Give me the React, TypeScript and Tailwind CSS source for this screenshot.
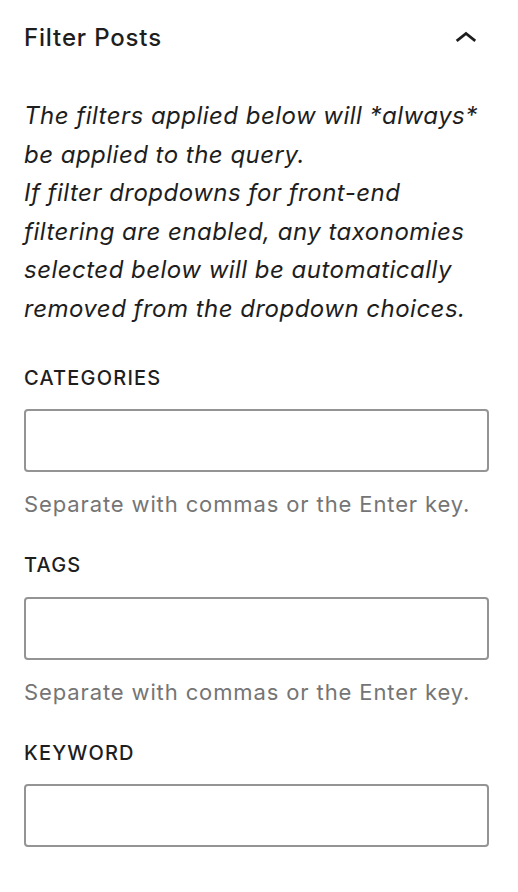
import React from "react";

function Field({ label, help }: { label: string; help?: boolean }) {
  return (
    <div className="flex flex-col">
      <div className="text-[20px] leading-[24px] font-medium uppercase tracking-[0.06em] text-[#1e1e1e]">{label}</div>
      <div className="mt-[19.5px] h-[63px] w-full rounded-[4px] border-2 border-[#949494] bg-white" />
      {help && (
        <div className="mt-[16px] text-[22px] leading-[32px] tracking-[0.04em] text-[#757575]">
          Separate with commas or the Enter key.
        </div>
      )}
    </div>
  );
}

export default function App() {
  return (
    <div
      className="min-h-[892px] w-[518px] bg-white pl-[24px] pr-[29px]"
      style={{ fontFamily: "Inter, 'Noto Sans', sans-serif" }}
    >
      <div className="mt-[22px] flex h-[32px] items-center justify-between">
        <div className="text-[24px] leading-[32px] font-medium tracking-[0.035em] text-[#1e1e1e]">Filter Posts</div>
        <svg
          viewBox="0 0 24 24"
          width="44"
          height="44"
          className="mr-[1px] mt-[2px] shrink-0"
          fill="#1e1e1e"
        >
          <path d="M6.5 12.4L12 8l5.5 4.4-.9 1.2L12 10l-4.6 3.6-1-1.2z" />
        </svg>
      </div>
      <p className="mt-[43px] text-[24px] leading-[38.5px] italic tracking-[0.02em] text-[#1e1e1e] whitespace-nowrap">
        The filters applied below will *always*
        <br />
        be applied to the query.
        <br />
        If filter dropdowns for front-end
        <br />
        filtering are enabled, any taxonomies
        <br />
        selected below will be automatically
        <br />
        removed from the dropdown choices.
      </p>
      <div className="mt-[37.5px] flex flex-col gap-[33px]">
        <Field label="Categories" help />
        <Field label="Tags" help />
        <Field label="Keyword" />
      </div>
    </div>
  );
}
